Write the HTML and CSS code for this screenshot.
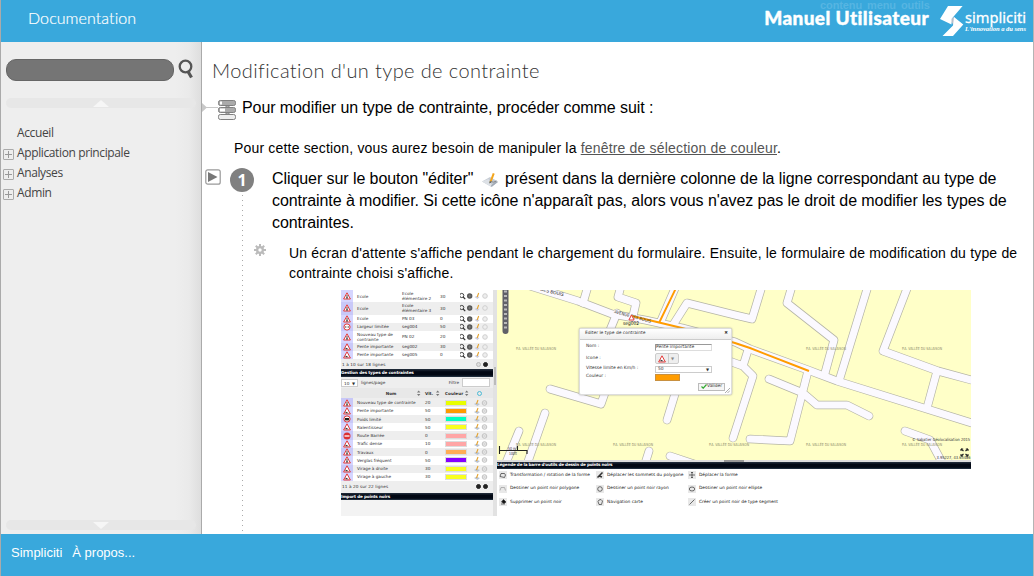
FILE: index.html
```html
<!DOCTYPE html>
<html lang="fr">
<head>
<meta charset="utf-8">
<title>Modification d'un type de contrainte</title>
<link rel="stylesheet" href="styles.css">
</head>
<body>
<svg class="defs" width="0" height="0">
  <defs>
    <symbol id="warn" viewBox="0 0 8 8"><path d="M4 .8 7.4 7H.6Z" fill="#fff" stroke="#e33b3b" stroke-width="1"/><path d="M4 3v3M3 6h2" stroke="#333" stroke-width=".9"/></symbol>
    <symbol id="slope" viewBox="0 0 8 8"><path d="M4 .8 7.4 7H.6Z" fill="#fff" stroke="#e33b3b" stroke-width="1"/><path d="M2.5 4.500 6 6.300H2.500Z" fill="#333"/></symbol>
    <symbol id="width" viewBox="0 0 8 8"><circle cx="4" cy="4" r="3.100" fill="#fff" stroke="#e33b3b"/><path d="M1.800 4l1.400-1v2ZM6.200 4l-1.400-1v2Z" fill="#333"/></symbol>
    <symbol id="truck" viewBox="0 0 8 8"><circle cx="4" cy="4" r="3.100" fill="#fff" stroke="#d33"/><path d="M2 3h4v2.400H2Z" fill="#222"/></symbol>
    <symbol id="noentry" viewBox="0 0 8 8"><circle cx="4" cy="4" r="3.500" fill="#dc3030"/><path d="M1.500 4h5" stroke="#fff" stroke-width="1.300"/></symbol>
    <symbol id="acts" viewBox="0 0 32 8"><circle cx="1.700" cy="3.500" r="2.100" fill="none" stroke="#333" stroke-width=".9"/><path d="m3.200 5 2 2.200" stroke="#333" stroke-width="1.200"/><circle cx="9.700" cy="4" r="2.700" fill="#555"/><path d="M8.200 4h3M9.700 2.500v3" stroke="#999" stroke-width=".5"/><path d="m14.500 5 2-1 3 1-2 2Z" fill="#ccd"/><path d="m17.200 5 1.500-4" stroke="#e5a32f" stroke-width="1.100"/><circle cx="25" cy="4" r="2.300" fill="#eee" stroke="#ccc" stroke-width=".9"/></symbol>
    <symbol id="edit" viewBox="0 0 16 8"><path d="m0 5 2.500-1.300L6 5 3.500 7Z" fill="#b9c4d4"/><path d="M2.500 5 4 1" stroke="#e5a32f" stroke-width="1.100"/><circle cx="10.500" cy="4" r="2.300" fill="#eee" stroke="#bbb" stroke-width=".9"/><path d="m9.500 3 2 2m0-2-2 2" stroke="#bbb" stroke-width=".5"/></symbol>
  </defs>
</svg>
<div class="page">
  <header class="top">
    <span class="doc">Documentation</span>
    <nav class="skip">contenu menu outils</nav>
    <span class="manual">Manuel Utilisateur</span>
    <svg class="logo" width="88" height="32" viewBox="0 0 88 32">
      <path d="m9 15 5-3 5 6-4 3Z" fill="#b4c0cc"/>
      <path d="M8 1h14.600L11.500 14v5.500L0 14Z" fill="#fff"/>
      <path d="m14 12 9.300 7.500L13 31H2.500L13 20.500Z" fill="#fff"/>
      <text x="25" y="18" class="logo-name" textLength="61" lengthAdjust="spacingAndGlyphs">simpliciti</text>
      <text x="25" y="26" class="logo-tag" textLength="61" lengthAdjust="spacingAndGlyphs">L'innovation a du sens</text>
    </svg>
  </header>
  <div class="middle">
    <aside class="side">
      <div class="search"><span class="field"></span>
        <svg width="16" height="20" viewBox="0 0 16 20"><circle cx="7.500" cy="7.500" r="5.800" fill="none" stroke="#555" stroke-width="2.300"/><path d="m10 12.500 3.500 6" stroke="#555" stroke-width="3.200"/></svg>
      </div>
      <div class="scroller"><i class="up"></i></div>
      <ul class="menu">
        <li><span class="blank"></span>Accueil</li>
        <li><span class="plus"></span>Application principale</li>
        <li><span class="plus"></span>Analyses</li>
        <li><span class="plus"></span>Admin</li>
      </ul>
      <div class="scroller"><i class="down"></i></div>
    </aside>
    <main class="content">
      <h1>Modification d'un type de contrainte</h1>
      <div class="intro">
        <svg width="34" height="22" viewBox="0 0 34 22"><path d="M0 4v9l5-4.500Z" fill="#c8c8c8"/><path d="M4 8.500h12" stroke="#c8c8c8"/><g stroke="#808080" fill="#aaa"><path d="M24 6v10h3V6Z"/><rect x="16.500" y="1.500" width="17" height="5" rx="1.800"/><rect x="16.500" y="8.500" width="17" height="5" rx="1.800"/><rect x="16.500" y="15.500" width="17" height="5" rx="1.800" fill="#eee"/></g><path d="M18 2.500h2v3h-2ZM18 9.500h5v3h-5Z" fill="#fff"/></svg>
        <span>Pour modifier un type de contrainte, procéder comme suit :</span>
      </div>
      <p class="need">Pour cette section, vous aurez besoin de manipuler la <a>fenêtre de sélection de couleur</a>.</p>
      <section class="step">
        <svg class="play" width="16" height="16" viewBox="0 0 16 16"><rect x=".8" y=".8" width="14.400" height="14.400" rx="2" fill="#fff" stroke="#999" stroke-width="1.200"/><path d="M3 3v10l9.500-5Z" fill="#777"/></svg>
        <div class="rail"><b>1</b><span></span></div>
        <div class="body">
          <p class="order">Cliquer sur le bouton "éditer" <svg width="18" height="16" viewBox="0 0 18 16"><path d="m0 9.500 8-4.500 8 4.500-6.500 5.500Z" fill="#c6ccd4"/><path d="m0 9.500 6.500-2.500 3.500 6.500-.5 1.500Z" fill="#dde1e6"/><path d="m9 13.500 4.500-4 2.500.5-6.500 5Z" fill="#a3abb6"/><path d="m7.600 9.500 3.200-8.500 1.900.8-3.200 8.200Z" fill="#f3a51c"/><path d="m7.300 11.500.4-2.200 1.800.8Z" fill="#443"/><path d="M8.500 9.500q3 1.500 6-.5" fill="none" stroke="#777" stroke-width=".8"/></svg> présent dans la dernière colonne de la ligne correspondant au type de<br>contrainte à modifier. Si cette icône n'apparaît pas, alors vous n'avez pas le droit de modifier les types de<br>contraintes.</p>
          <div class="result">
            <svg width="12" height="12" viewBox="0 0 12 12"><g stroke="#bbb" stroke-width="2"><path d="M6 0v12M0 6h12M1.800 1.800l8.400 8.400M10.200 1.800l-8.400 8.400"/></g><circle cx="6" cy="6" r="4" fill="#bbb"/><circle cx="6" cy="6" r="1.700" fill="#fff"/></svg>
            <p>Un écran d'attente s'affiche pendant le chargement du formulaire. Ensuite, le formulaire de modification du type de<br>contrainte choisi s'affiche.</p>
          </div>
          <div class="shot">
            <div class="lists">
              <div class="grid places">
                <div class="r h12"><i><svg><use href="#warn"/></svg></i><span>Ecole</span><span>Ecole<br>élémentaire 2</span><span>30</span><svg><use href="#acts"/></svg></div>
                <div class="r h13"><i><svg><use href="#warn"/></svg></i><span>Ecole</span><span>Ecole<br>élémentaire 3</span><span>30</span><svg><use href="#acts"/></svg></div>
                <div class="r"><i><svg><use href="#warn"/></svg></i><span>Ecole</span><span>PN 03</span><span>0</span><svg><use href="#acts"/></svg></div>
                <div class="r"><i><svg><use href="#width"/></svg></i><span>Largeur limitée</span><span>seg004</span><span>50</span><svg><use href="#acts"/></svg></div>
                <div class="r h12"><i><svg><use href="#warn"/></svg></i><span>Nouveau type de<br>contrainte</span><span>PN 02</span><span>20</span><svg><use href="#acts"/></svg></div>
                <div class="r"><i><svg><use href="#slope"/></svg></i><span>Pente importante</span><span>seg002</span><span>30</span><svg><use href="#acts"/></svg></div>
                <div class="r"><i><svg><use href="#slope"/></svg></i><span>Pente importante</span><span>seg005</span><span>0</span><svg><use href="#acts"/></svg></div>
              </div>
              <div class="count"><span>1 à 10 sur 18 lignes</span><em class="off"></em><em></em></div>
              <div class="bar">Gestion des types de contraintes</div>
              <div class="tools"><span class="select">10 <small>▼</small></span><span>lignes/page</span><span class="filter">Filtre</span><span class="input"></span></div>
              <div class="grid types">
                <div class="r head"><span></span><span>Nom</span><span>Vit.</span><span>Couleur</span><em></em><svg class="sorts" viewBox="0 0 153 10"><path d="m76 4.500 1.700-2 1.700 2Zm0 1.400 1.700 2 1.700-2ZM95 4.500l1.700-2 1.700 2Zm0 1.400 1.700 2 1.700-2ZM124 4.500l1.700-2 1.700 2Zm0 1.400 1.700 2 1.700-2Z" fill="#777"/></svg></div>
                <div class="r"><i><svg><use href="#warn"/></svg></i><span>Nouveau type de contrainte</span><span>20</span><b class="c-lime"></b><svg><use href="#edit"/></svg></div>
                <div class="r"><i><svg><use href="#slope"/></svg></i><span>Pente importante</span><span>50</span><b class="c-orange"></b><svg><use href="#edit"/></svg></div>
                <div class="r"><i><svg><use href="#truck"/></svg></i><span>Poids limité</span><span>50</span><b class="c-mint"></b><svg><use href="#edit"/></svg></div>
                <div class="r"><i><svg><use href="#slope"/></svg></i><span>Ralentisseur</span><span>50</span><b class="c-yellow"></b><svg><use href="#edit"/></svg></div>
                <div class="r"><i><svg><use href="#noentry"/></svg></i><span>Route Barrée</span><span>0</span><b class="c-pink"></b><svg><use href="#edit"/></svg></div>
                <div class="r"><i><svg><use href="#slope"/></svg></i><span>Trafic dense</span><span>10</span><b class="c-pink"></b><svg><use href="#edit"/></svg></div>
                <div class="r"><i><svg><use href="#warn"/></svg></i><span>Travaux</span><span>0</span><b class="c-peach"></b><svg><use href="#edit"/></svg></div>
                <div class="r"><i><svg><use href="#warn"/></svg></i><span>Verglas fréquent</span><span>50</span><b class="c-violet"></b><svg><use href="#edit"/></svg></div>
                <div class="r"><i><svg><use href="#slope"/></svg></i><span>Virage à droite</span><span>30</span><b class="c-yellow"></b><svg><use href="#edit"/></svg></div>
                <div class="r"><i><svg><use href="#slope"/></svg></i><span>Virage à gauche</span><span>30</span><b class="c-yellow"></b><svg><use href="#edit"/></svg></div>
              </div>
              <div class="count last"><span>11 à 20 sur 22 lignes</span><em></em><em></em></div>
              <div class="bar">Import de points noirs</div>
            </div>
            <div class="gutter"></div>
            <div class="right">
              <div class="map">
                <svg width="474" height="170" viewBox="497 290 474 170">
                  <defs>
                    <g id="roads" fill="none" stroke-linecap="round" stroke-linejoin="round">
                      <path d="M530 286 578 301 612 314 645 320 682 328 735 342 750 349 808 370 837 381 975 424"/>
                      <path d="M588 286 583 303M633 316 636 303 618 297 621 286M676 286 660 323M673 325 687 303 735 315 752 319 762 286"/>
                      <path d="M617 313 608 335 620 350 601 404 550 389"/>
                      <path d="M690 345 667 420M733 438 753 376 743 366 715 356M743 366 748 350"/>
                      <path d="M545 413 525 470M519 431 503 470M649 451 643 470M670 456 700 466"/>
                      <path d="M792 286 787 303 834 340 825 373M868 286 839 381M908 286 883 351 938 371 975 381M937 371 927 408"/>
                      <path d="M808 371 790 441 750 439M769 379 803 393 817 405 847 405 869 416M905 431 930 440 945 468"/>
                    </g>
                  </defs>
                  <rect x="497" y="290" width="474" height="170" fill="#ffffc8"/>
                  <use href="#roads" stroke="#b4b4a6" stroke-width="8.600"/>
                  <use href="#roads" stroke="#fbf9ff" stroke-width="7.200"/>
                  <path d="M677 286 659 323M632 316 682 328 735 343 750 348 809 371" fill="none" stroke="#ff9c00" stroke-width="1.900"/>
                  <rect x="502.500" y="284" width="6" height="50" rx="3" fill="#606068"/>
                  <path d="M504 291.500h3m-3 4.500h3m-3 4.500h3m-3 4.500h3m-3 4.500h3m-3 4.500h3m-3 4.500h3m-3 4.500h3m-3 4.500h3" stroke="#bbb" stroke-width="2"/>
                  <g class="area"><text x="516" y="350" textLength="40" lengthAdjust="spacingAndGlyphs">P.A. VALLÉE DU SALAISON</text><text x="806" y="350" textLength="40" lengthAdjust="spacingAndGlyphs">P.A. VALLÉE DU SALAISON</text><text x="902" y="350" textLength="40" lengthAdjust="spacingAndGlyphs">P.A. VALLÉE DU SALAISON</text><text x="516" y="446" textLength="40" lengthAdjust="spacingAndGlyphs">P.A. VALLÉE DU SALAISON</text><text x="613" y="446" textLength="40" lengthAdjust="spacingAndGlyphs">P.A. VALLÉE DU SALAISON</text><text x="709" y="446" textLength="40" lengthAdjust="spacingAndGlyphs">P.A. VALLÉE DU SALAISON</text><text x="806" y="446" textLength="40" lengthAdjust="spacingAndGlyphs">P.A. VALLÉE DU SALAISON</text><text x="902" y="446" textLength="40" lengthAdjust="spacingAndGlyphs">P.A. VALLÉE DU SALAISON</text></g>
                  <g class="street"><text transform="translate(540 290.500) rotate(14)" textLength="24">DES BOUIS</text><text transform="translate(614 313) rotate(15)" textLength="38" lengthAdjust="spacingAndGlyphs">AVENUE DES BOUIS</text></g>
                  <path d="m631.500 315 2.600 5h-5.200Z" fill="#fff" stroke="#e33b3b"/><text x="623" y="325" class="seg" textLength="16" lengthAdjust="spacingAndGlyphs">seg002</text>
                  <g class="note"><text x="912" y="440.500" textLength="58" lengthAdjust="spacingAndGlyphs">© Sabatier Géolocalisation 2015</text><text x="936.500" y="459" textLength="34" lengthAdjust="spacingAndGlyphs">3.95227, 43.65486</text></g>
                  <path d="m961 449 2.500 2m4.500-2-2.500 2M961 456l2.500-2m4.500 2-2.500-2" stroke="#222" stroke-width="1.200"/><path d="M961 451v-2h2.200m2.600 0h2.200v2m0 3v2h-2.200m-2.600 0H961v-2" fill="none" stroke="#222"/>
                  <path d="M499.500 446v8m0-3.500h27.500m0-.5v4m-9.500-8v4" fill="none" stroke="#222" stroke-width="1.100"/><g class="note"><text x="508" y="449.500" textLength="8" lengthAdjust="spacingAndGlyphs">50 m</text><text x="509" y="454.500" textLength="8" lengthAdjust="spacingAndGlyphs">100ft</text></g>
                </svg>
                <div class="dialog">
                  <header><span>Editer le type de contrainte</span><b>✖</b></header>
                  <div class="form">
                    <label>Nom :</label><span class="input">Pente importante</span>
                    <label>Icone :</label><span class="pick"><svg width="8" height="8"><use href="#slope"/></svg><small>▼</small></span>
                    <label>Vitesse limite en Km/h :</label><span class="speed">50<small>▼</small></span>
                    <label>Couleur :</label><span class="swatch"></span>
                  </div>
                  <div class="ok"><svg width="6" height="5" viewBox="0 0 6 5"><path d="m.5 2.500 1.700 1.700L5.500.5" fill="none" stroke="#3a3" stroke-width="1.200"/></svg>Valider</div>
                  <svg class="grip" width="5" height="5" viewBox="0 0 5 5"><path d="m0 5 5-5M2.500 5 5 2.500" stroke="#888" stroke-width=".7"/></svg>
                </div>
              </div>
              <div class="split"></div>
              <div class="bar">Légende de la barre d'outils de dessin de points noirs</div>
              <div class="legend">
                <div><svg viewBox="0 0 8 8"><path d="m1 5.500 1-3h3.500l1 1.500-1 2.500Z"/></svg><span>Transformation / rotation de la forme</span></div>
                <div><svg viewBox="0 0 8 8"><path d="m1.500 6.500 5-5M3 5l3 1" stroke-width="1.500"/></svg><span>Déplacer les sommets du polygone</span></div>
                <div><svg viewBox="0 0 8 8"><path d="M4 1v6M1 4h6M3 2l1-1 1 1M3 6l1 1 1-1"/></svg><span>Déplacer la forme</span></div>
                <div><svg viewBox="0 0 8 8"><path d="m1 5.500 1-3h3.500l1 3" stroke="#999"/></svg><span>Dessiner un point noir polygone</span></div>
                <div><svg viewBox="0 0 8 8"><circle cx="4" cy="4" r="2.300"/></svg><span>Dessiner un point noir rayon</span></div>
                <div><svg viewBox="0 0 8 8"><ellipse cx="4" cy="4" rx="2.700" ry="2"/></svg><span>Dessiner un point noir ellipse</span></div>
                <div><svg viewBox="0 0 8 8"><path d="M4.500 1.500 7 4 5 5.500 2.500 4Z" fill="#111"/><path d="M2 6h4"/></svg><span>Supprimer un point noir</span></div>
                <div><svg viewBox="0 0 8 8"><path d="M2 3.500 3 6.500h2.500L6.500 3 5 1.500 3 2Z"/></svg><span>Navigation carte</span></div>
                <div><svg viewBox="0 0 8 8"><path d="m1.500 6.500 5-5"/></svg><span>Créer un point noir de type segment</span></div>
              </div>
            </div>
          </div>
        </div>
      </section>
    </main>
  </div>
  <footer class="foot"><a>Simpliciti</a><a>À propos...</a></footer>
</div>
</body>
</html>
```

FILE: styles.css
```css
* { box-sizing: border-box; }
body { margin: 0; font-family: "Liberation Sans", Arial, sans-serif; color: #000; background: #fff; }
.defs { position: absolute; }
p, h1, ul { margin: 0; padding: 0; }
.page { width: 1034px; height: 576px; border-left: 1px solid #aaa; border-right: 1px solid #b4b4b4; display: flex; flex-direction: column; overflow: hidden; }

.top { position: relative; height: 42px; flex: none; background: #39a8dc; color: #fff; display: flex; align-items: flex-start; }
.doc { font: 300 16px/20px Lato, sans-serif; letter-spacing: .08px; -webkit-text-stroke: .2px #fff; margin: 8px auto 0 27px; }
.manual { font: 900 19px/22px Lato, sans-serif; letter-spacing: .4px; -webkit-text-stroke: .4px #fff; margin: 7px 11px 0 0; white-space: nowrap; }
.skip { position: absolute; left: 819px; top: -1px; font: bold 11px/12px "Liberation Sans", sans-serif; color: #56b5e2; word-spacing: 2px; letter-spacing: -.1px; }
.logo { margin: 5px 5px 0 0; }
.logo-name { font: 15px "Noto Sans", sans-serif; fill: #fff; stroke: #fff; stroke-width: .3; }
.logo-tag { font: italic bold 5.500px "Liberation Serif", serif; fill: #fff; }

.middle { flex: 1; display: flex; min-height: 0; }
.side { width: 201px; flex: none; border-right: 1px solid #aaa; background: linear-gradient(90deg, #eee 87%, #eaeaea 94%, #dedede); display: flex; flex-direction: column; }
.search { display: flex; align-items: flex-start; gap: 4px; padding: 17px 0 0 5px; height: 56px; flex: none; }
.field { width: 168px; height: 22px; border-radius: 10px; background: #757575; border: 1px solid #666; }
.scroller { height: 10px; margin: 0 5px; flex: none; border-radius: 5px; background: #e7e7e7; display: flex; justify-content: center; align-items: center; }
.up, .down { border: 8px solid transparent; border-top-width: 0; border-bottom: 7px solid #f6f6f6; }
.down { border-top: 7px solid #f6f6f6; border-bottom-width: 0; }
.menu { list-style: none; flex: 1; padding-top: 15px; font: 12px/20px "Open Sans", "Noto Sans", sans-serif; letter-spacing: -.38px; color: #444; }
.menu li { display: flex; align-items: center; gap: 3px; padding-left: 2px; height: 20px; }
.plus, .blank { width: 11px; height: 11px; margin-top: 3px; }
.plus { border: 1px solid #aaa; border-radius: 1px; background: linear-gradient(#999, #999) center / 7px 1px no-repeat, linear-gradient(#999, #999) center / 1px 7px no-repeat; }
.side > .scroller:last-child { margin-bottom: 4px; }

.content { flex: 1; min-width: 0; overflow: hidden; }
h1 { font: 300 20px/28px Lato, sans-serif; letter-spacing: .39px; margin: 14px 0 0 10px; color: #333; white-space: nowrap; }
.intro { display: flex; gap: 6px; padding-top: 15px; font-size: 16px; line-height: 20px; height: 51px; letter-spacing: -.085px; }
.intro span { margin-top: -1px; }
.need { padding: 3px 0 0 32px; font-size: 14px; line-height: 20px; white-space: nowrap; letter-spacing: .18px; }
.need a { color: #555; text-decoration: underline; }
.step { display: flex; height: 376px; padding-top: 10px; }
.play { margin: 1px 0 0 3px; }
.rail { width: 24px; margin-left: 9px; display: flex; flex-direction: column; align-items: center; }
.rail b { width: 24px; height: 24px; flex: none; border-radius: 50%; background: #808080; color: #fff; font: bold 16px/24px "Open Sans", sans-serif; text-align: center; }
.rail span { flex: 1; width: 1px; margin-top: 3px; background: repeating-linear-gradient(#aaa 0 1px, transparent 1px 5px); }
.body { margin-left: 18px; white-space: nowrap; }
.order { font-size: 16px; line-height: 22px; letter-spacing: -.073px; }
.order svg { margin: 0 1px 0 4px; vertical-align: -4px; height: 16px; }
.result { display: flex; margin: 9px 0 0 -18px; font-size: 14px; line-height: 20px; letter-spacing: .178px; }
.result svg { margin-top: 1px; }
.result p { margin-left: 23px; }

.shot { width: 630px; height: 226px; margin: 7px 0 0 69px; display: flex; overflow: hidden; font: 4.200px/5.200px "DejaVu Sans", sans-serif; letter-spacing: 0; color: #333; text-rendering: geometricPrecision; background: #fff; }
.lists { width: 152px; flex: none; background: #f3f3f3; }
.grid .r { display: grid; align-items: center; height: 8.275px; background: #fff; }
.grid .r:nth-child(even) { background: #eee; }
.places .r { grid-template-columns: 12px 49px 38px 20px 32px; }
.places .r:not(.h12):not(.h13) { height: 8.100px; }
.places .r.h12 { height: 12px; }
.places .r.h13 { height: 12.500px; }
.grid i { align-self: stretch; display: flex; align-items: center; justify-content: center; background: #d5d5ff; }
.grid .r:nth-child(even) i { background: #c8c8f8; }
.grid i svg { width: 8px; height: 8px; }
.grid .r > svg { width: 32px; height: 8px; }
.grid span { padding-left: 4px; white-space: nowrap; line-height: 5px; }
.places span:nth-child(3), .places span:nth-child(4) { padding-left: 0; }
.count { display: flex; align-items: center; height: 10.500px; gap: 2px; padding-right: 5px; background: #eee; }
.count span { margin-right: auto; padding-left: 1px; letter-spacing: .1px; }
.count em { width: 5px; height: 5px; border-radius: 50%; border: 1.600px solid #222; background: #222; }
.count .off { border-color: #bbb; background: #ddd; }
.bar { height: 7.500px; background: linear-gradient(#25303f, #020814 35%, #020814 75%, #283848); color: #fff; font: bold 4.200px/7px "DejaVu Sans", sans-serif; letter-spacing: -.17px; overflow: hidden; }
.tools { display: flex; align-items: center; height: 11.500px; gap: 3px; background: #eee; }
.tools small, .dialog small { font-size: 4px; }
.select { width: 17px; height: 8px; padding: 1px 2px; background: #fff; border: .5px solid #ccc; display: flex; justify-content: space-between; }
.filter { margin-left: auto; }
.tools .input { width: 28px; height: 9px; background: #fff; border: 1px solid #ccc; margin-right: 3px; }
.types .r { grid-template-columns: 12px 72px 19px 30px 16px; }
.types .r > svg { width: 16px; height: 8px; }
.types span:nth-child(3) { padding-left: 0; }
.types b { width: 22px; height: 6px; margin-left: 1px; border: .5px solid #ddd; }
.types .head { position: relative; height: 10px; background: #e8e8e8; font-weight: bold; text-align: center; }
.types .head span:nth-child(3) { text-align: left; }
.types .head em { width: 5px; height: 5px; margin-left: 3px; border-radius: 50%; border: 1.500px solid #4bbad6; }
.types .r > svg.sorts { position: absolute; left: 0; top: 0; width: 153px; height: 10px; }
.types .head span:nth-child(4) { padding-left: 0; text-align: left; margin-left: 1px; }
.c-lime { background: #e8ff00; } .c-orange { background: #ff9a00; } .c-mint { background: #00ffc0; } .c-yellow { background: #f8ff20; }
.c-pink { background: #ffa6a6; } .c-peach { background: #ffad55; } .c-violet { background: #8500ff; }
.count.last { height: 11.500px; }
.gutter { width: 4px; flex: none; background: linear-gradient(#bbb, #bbb) 1px 77px / 2px 18px no-repeat, #e2e2e2; }
.right { width: 474px; flex: none; }
.map { position: relative; height: 170px; overflow: hidden; }
.map > svg { display: block; }
.area text { font: 4px "DejaVu Sans Condensed", "DejaVu Sans", sans-serif; fill: #8c8c68; }
.street text { font: 4.500px "DejaVu Sans", sans-serif; fill: #333; }
.seg { font: 5px "DejaVu Sans", sans-serif; fill: #111; }
.note text { font: 4.200px "DejaVu Sans", sans-serif; fill: #333; }
.dialog { position: absolute; left: 82px; top: 38px; width: 153px; height: 67px; background: #fff; border: 1px solid #ddd; border-radius: 2px; box-shadow: 0 0 2px #999; font-size: 4.400px; }
.dialog header { height: 11px; padding: 0 3px 0 5px; display: flex; align-items: center; justify-content: space-between; background: linear-gradient(#fff, #eee); border-bottom: .5px solid #ccc; }
.form { display: grid; grid-template-columns: 69px 57px; grid-template-rows: 9px 14px 7px 9px; align-items: center; padding: 2.500px 0 0 6px; }
.dialog .input { height: 7px; border: .7px solid #999; border-right-color: #ddd; border-bottom-color: #ddd; line-height: 5px; }
.pick { width: 24px; height: 11px; background: linear-gradient(90deg, #eee 54%, #ccc 54% 57%, #eee 57%); border-radius: 2px; border: .5px solid #ccc; display: flex; align-items: center; justify-content: space-between; padding: 0 4px 0 2px; color: #888; }
.speed { display: flex; justify-content: space-between; height: 7px; padding: 0 2px; border: .5px solid #ccc; line-height: 5px; }
.swatch { width: 25px; height: 7px; background: #ff9c00; border: .5px solid #c89040; }
.ok { width: 27px; height: 8px; margin: 1px 0 0 118px; border: 1px solid #bbb; background: #f6f6f6; display: flex; align-items: center; padding-left: 2px; }
.grip { position: absolute; right: 1px; bottom: 1px; }
.split { height: 2px; background: linear-gradient(#999, #999) 227px 0 / 20px 2px no-repeat, #ddd; }
.right .bar { height: 6.500px; line-height: 6px; letter-spacing: -.22px; }
.legend { display: grid; grid-template-columns: 97px 92px 150px; grid-auto-rows: 13.500px; padding: 0 0 0 2px; color: #222; font-size: 4.330px; }
.legend div { display: flex; align-items: center; gap: 3px; }
.legend svg { width: 8px; height: 8px; background: #e8e8e8; fill: none; stroke: #333; stroke-width: .7; }

.foot { height: 42px; flex: none; background: #39a8dc; color: #fff; display: flex; gap: 10px; padding: 10px 0 0 10px; font-size: 13px; line-height: 18px; }
```
